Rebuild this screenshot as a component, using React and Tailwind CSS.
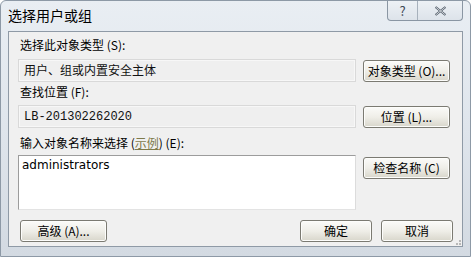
export default function App() {
  const btn =
    "h-[22px] rounded-[3px] border border-[#7b7a72] bg-gradient-to-b from-[#fbfbf9] via-[#efeee8] to-[#d8d6cb] text-[12px] text-black shadow-[inset_0_0_0_1px_#fdfdfb] flex items-center justify-center";
  const field =
    "h-[23px] border border-[#d9d9d9] bg-[#efefef] shadow-[inset_0_0_0_1px_#f7f7f7] flex items-center px-[5px] text-[12px] text-[#111]";

  return (
    <div
      className="w-[471px] h-[257px] bg-gradient-to-b from-[#e9eef3] via-[#dfe5ec] to-[#d3dae2] flex flex-col border border-[#8d99a6] rounded-t-[6px] overflow-hidden"
      style={{ fontFamily: '"Noto Sans CJK SC", "DejaVu Sans", sans-serif' }}
    >
      {/* Title bar */}
      <div className="h-[30px] flex items-start justify-between">
        <div className="pl-[7px] pt-[5px] text-[14px] text-black leading-[18px]">选择用户或组</div>
        <div className="flex h-[20px] mr-[7px] border border-t-0 border-[#8a96a3] rounded-b-[4px] bg-gradient-to-b from-[#edf1f5] to-[#dde3ea] overflow-hidden">
          <div className="w-[30px] flex items-center justify-center border-r border-[#a7b1bc] text-[13px] text-[#3c4754] leading-none">?</div>
          <div className="w-[44px] flex items-center justify-center">
            <svg width="13" height="10" viewBox="0 0 13 10">
              <path d="M1.5 1 L11.5 9 M11.5 1 L1.5 9" stroke="#4a5562" strokeWidth="2.2" fill="none" />
              <path d="M1.5 1 L11.5 9 M11.5 1 L1.5 9" stroke="#f4f6f8" strokeWidth="0.8" fill="none" />
            </svg>
          </div>
        </div>
      </div>

      {/* Client area */}
      <div className="mx-[7px] h-[216px] border border-[#8f9aa6] bg-[#f0f0f0] px-[9px] pt-[5px] relative">
        <div className="text-[12px] leading-[16px] pl-[2px] text-black">选择此对象类型 (S):</div>
        <div className="mt-[5px] flex gap-[7px] items-center">
          <div className={`${field} w-[338px]`}>用户、组或内置安全主体</div>
          <button className={`${btn} w-[87px] mt-[2px]`}>对象类型 (O)...</button>
        </div>

        <div className="mt-[2px] text-[12px] leading-[16px] pl-[2px] text-black">查找位置 (F):</div>
        <div className="mt-[5px] flex gap-[7px] items-center">
          <div className={`${field} w-[338px]`} style={{ fontFamily: '"Liberation Mono", "DejaVu Sans Mono", monospace' }}>
            LB-201302262020
          </div>
          <button className={`${btn} w-[87px]`}>位置 (L)...</button>
        </div>

        <div className="mt-[7px] text-[12px] leading-[16px] pl-[2px] text-black">
          输入对象名称来选择 (<span className="text-[#7e7a4a] underline">示例</span>) (E):
        </div>
        <div className="mt-[4px] flex gap-[7px] items-start">
          <div
            className="w-[338px] h-[55px] border border-[#9c9c9c] border-r-[#dcdcdc] border-b-[#e3e3e3] bg-white px-[3px] pt-[1px] text-[12px] leading-[16px] text-black"
            style={{ fontFamily: '"DejaVu Sans", sans-serif' }}
          >
            administrators
          </div>
          <button className={`${btn} w-[87px] mt-[2px]`}>检查名称 (C)</button>
        </div>

        <div className="mt-[10px] flex items-center">
          <button className={`${btn} w-[87px] ml-[2px]`}>高级 (A)...</button>
          <div className="flex-1" />
          <button className={`${btn} w-[72px]`}>确定</button>
          <button className={`${btn} w-[72px] ml-[9px]`}>取消</button>
        </div>

        <div className="absolute right-[1px] bottom-[1px] grid grid-cols-3 gap-[1px]">
          <span />
          <span />
          <span className="w-[2px] h-[2px] bg-[#b8b8b8]" />
          <span />
          <span className="w-[2px] h-[2px] bg-[#b8b8b8]" />
          <span className="w-[2px] h-[2px] bg-[#b8b8b8]" />
        </div>
      </div>
    </div>
  );
}
